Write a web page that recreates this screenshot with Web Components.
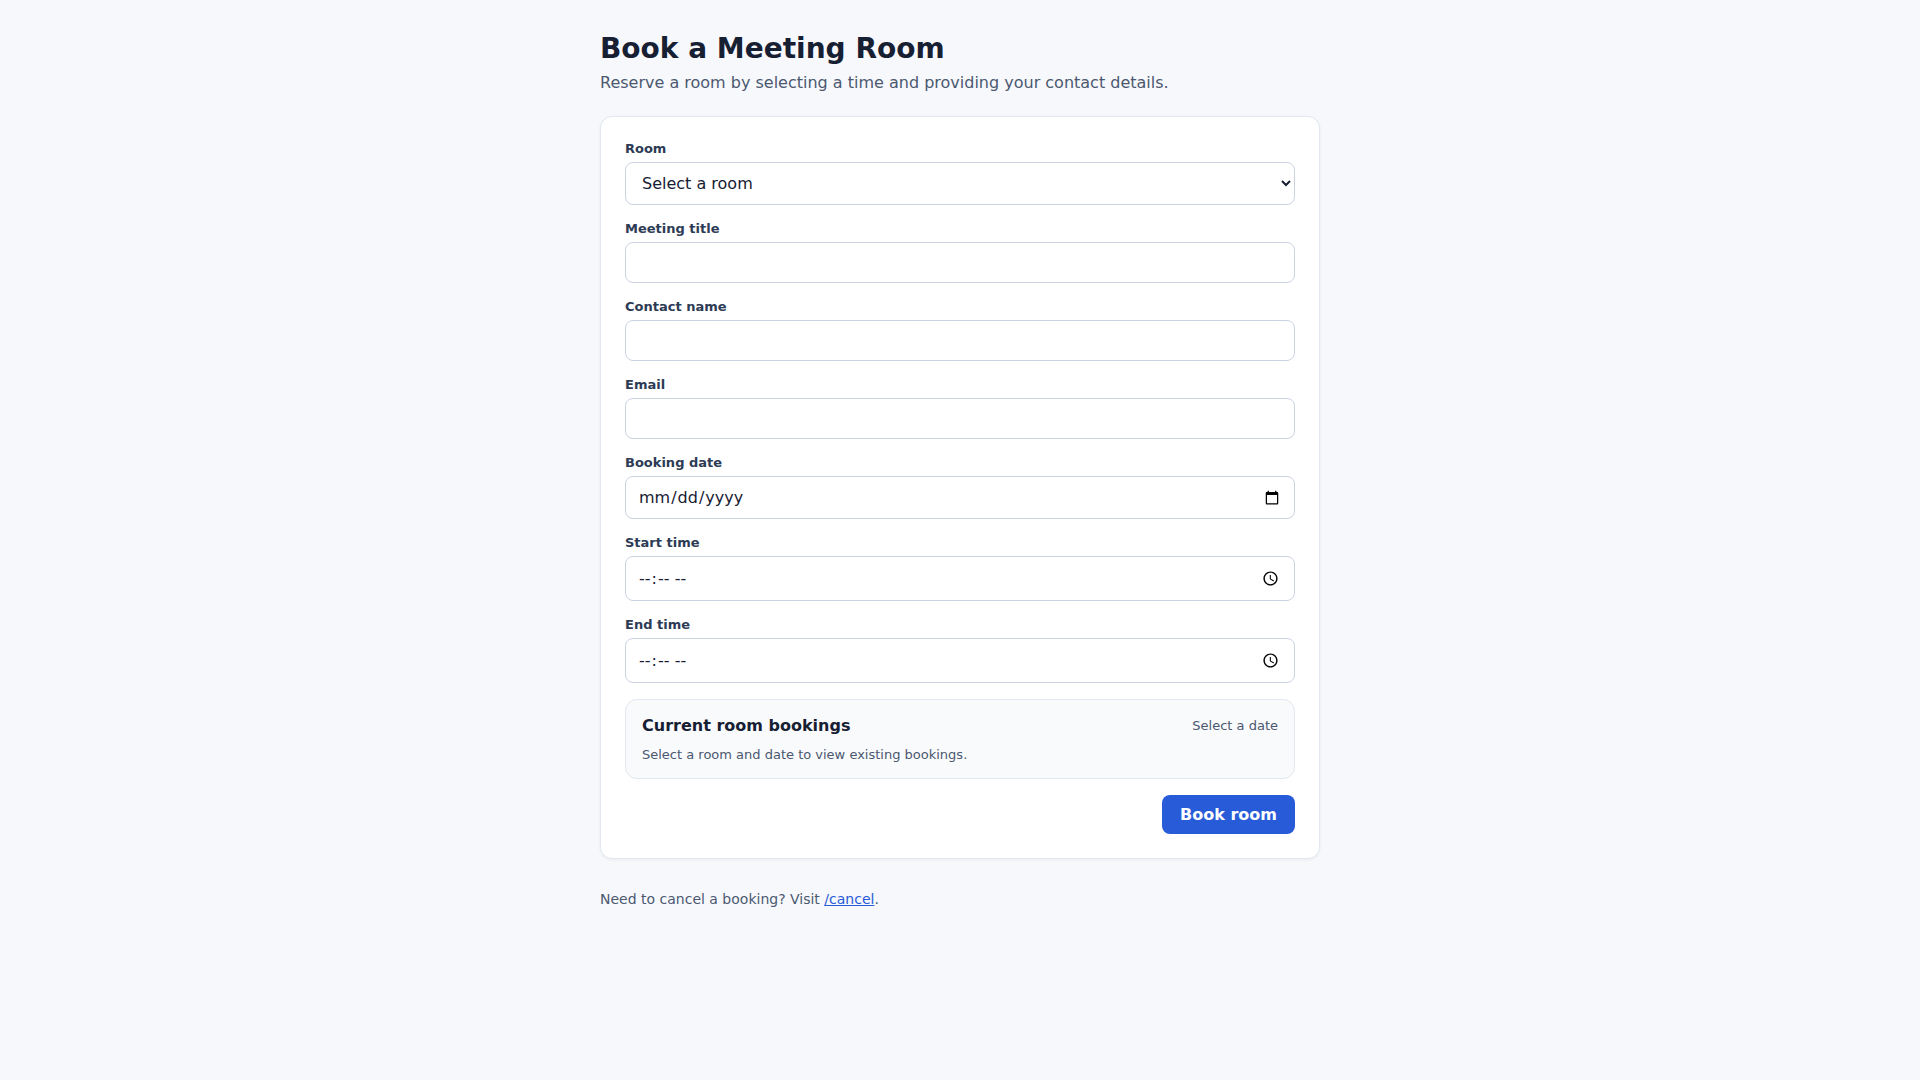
<!DOCTYPE html>
<html lang="en">
<head>
<meta charset="utf-8">
<meta name="viewport" content="width=device-width, initial-scale=1">
<title>Book a Meeting Room</title>
<style>
  :root {
    --bg: #f7f8fc;
    --text: #172033;
    --muted: #4b5870;
    --label: #2d3b55;
    --line: #e2e7f0;
    --control-line: #cbd3e3;
    --accent: #285bd7;
  }
  body {
    margin: 0;
    background: var(--bg);
    color: var(--text);
    font: 16px "DejaVu Sans", sans-serif;
  }
</style>
</head>
<body>
<booking-page>
  <span slot="title">Book a Meeting Room</span>
  <span slot="intro">Reserve a room by selecting a time and providing your contact details.</span>
  <booking-form></booking-form>
  <span slot="footer">Need to cancel a booking? Visit <cancel-link></cancel-link>.</span>
</booking-page>

<script>
  const define = (name, html, setup) => {
    const template = document.createElement('template');
    template.innerHTML = html;
    customElements.define(name, class extends HTMLElement {
      connectedCallback() {
        if (this.shadowRoot) return;
        const root = this.attachShadow({ mode: 'open' });
        root.append(template.content.cloneNode(true));
        if (setup) setup(this, root);
      }
    });
  };

  define('booking-page', `
    <style>
      :host { display: block; }
      main { box-sizing: border-box; max-width: 752px; margin: 0 auto; padding: 32px 16px; }
      h1 { margin: 0 0 8px; font-size: 28px; }
      p { margin: 0; color: var(--muted); }
      header { margin-bottom: 24px; }
      footer { margin-top: 32px; }
      footer p { font-size: 14px; }
    </style>
    <main>
      <header>
        <h1><slot name="title"></slot></h1>
        <p><slot name="intro"></slot></p>
      </header>
      <slot></slot>
      <footer><p><slot name="footer"></slot></p></footer>
    </main>`);

  define('cancel-link', `
    <style>
      :host { display: inline; }
      a { color: var(--accent); }
    </style>
    <a href="/cancel">/cancel</a>`);

  // A label and its control share one shadow root so that "for" resolves.
  define('form-field', `
    <style>
      :host { display: flex; flex-direction: column; gap: 6px; }
      label { color: var(--label); font-size: 13px; font-weight: 600; }
      input, select {
        box-sizing: border-box;
        width: 100%;
        padding: 10px 12px;
        border: 1px solid var(--control-line);
        border-radius: 8px;
        background: #fff;
        color: var(--text);
        font: inherit;
      }
    </style>
    <label for="control"></label>`, (host, root) => {
      root.querySelector('label').textContent = host.getAttribute('label');
      const type = host.getAttribute('type') || 'text';
      const control = document.createElement(type === 'select' ? 'select' : 'input');
      control.id = 'control';
      control.name = host.getAttribute('name');
      control.required = true;
      if (type === 'select') control.add(new Option(host.getAttribute('placeholder'), ''));
      else control.type = type;
      root.append(control);
    });

  define('bookings-panel', `
    <style>
      :host {
        display: flex;
        flex-direction: column;
        gap: 12px;
        padding: 16px;
        border: 1px solid var(--line);
        border-radius: 12px;
        background: #f9fafc;
      }
      .head { display: flex; align-items: center; justify-content: space-between; gap: 12px; }
      h2 { margin: 0; font-size: 16px; }
      p, .date { margin: 0; color: var(--muted); font-size: 13px; }
    </style>
    <div class="head">
      <h2><slot name="title"></slot></h2>
      <span class="date"><slot name="date"></slot></span>
    </div>
    <p><slot></slot></p>`);

  define('booking-form', `
    <style>
      :host {
        display: block;
        padding: 24px;
        border: 1px solid var(--line);
        border-radius: 12px;
        background: #fff;
        box-shadow: 0 1px 3px rgb(23 32 51 / 6%);
      }
      form { display: flex; flex-direction: column; gap: 16px; }
      .actions { display: flex; justify-content: flex-end; }
      button {
        padding: 10px 18px;
        border: 0;
        border-radius: 8px;
        background: var(--accent);
        color: #fff;
        font: inherit;
        font-weight: 600;
        cursor: pointer;
      }
    </style>
    <form>
      <form-field label="Room" name="room" type="select" placeholder="Select a room"></form-field>
      <form-field label="Meeting title" name="title"></form-field>
      <form-field label="Contact name" name="contact"></form-field>
      <form-field label="Email" name="email" type="email"></form-field>
      <form-field label="Booking date" name="date" type="date"></form-field>
      <form-field label="Start time" name="start" type="time"></form-field>
      <form-field label="End time" name="end" type="time"></form-field>
      <bookings-panel>
        <span slot="title">Current room bookings</span>
        <span slot="date">Select a date</span>
        Select a room and date to view existing bookings.
      </bookings-panel>
      <div class="actions"><button type="submit">Book room</button></div>
    </form>`);
</script>
</body>
</html>
